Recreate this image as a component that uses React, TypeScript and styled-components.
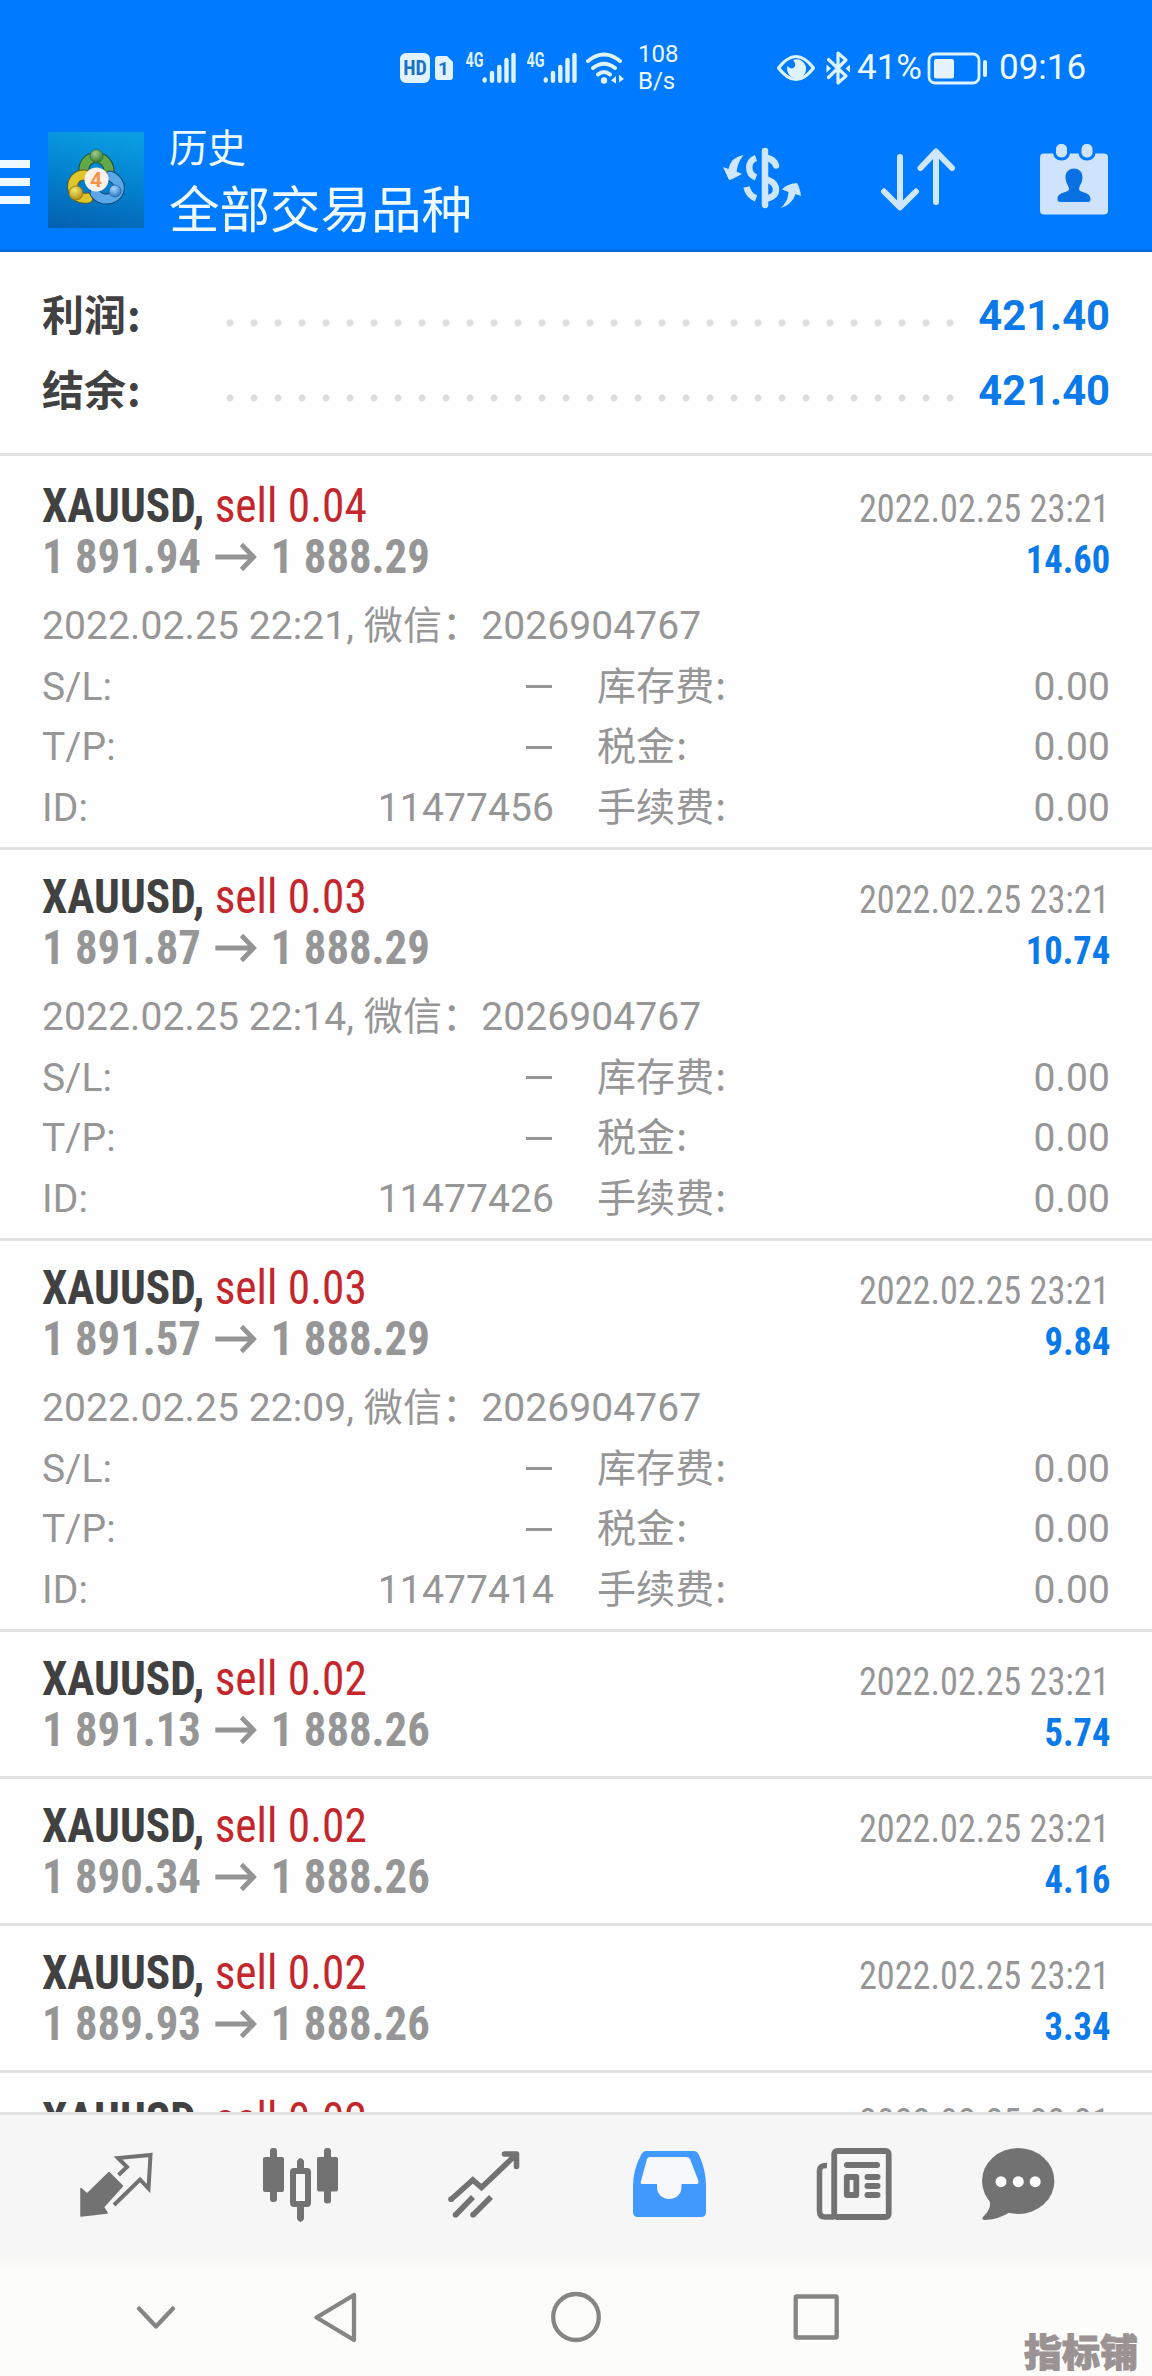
import React from 'react';
import styled, { createGlobalStyle } from 'styled-components';

const GlobalStyle = createGlobalStyle`
  * { box-sizing: border-box; }
  body {
    margin: 0;
    background: #fefefe;
    font-family: Roboto, "Noto Sans CJK SC", sans-serif;
  }
  svg { display: block; flex: none; }
`;

const Screen = styled.div`
  position: relative;
  display: flex;
  flex-direction: column;
  width: 1152px;
  height: 2376px;
  overflow: hidden;
  background: #fefefe;
`;

const Header = styled.header`
  height: 252px;
  background: #007aff;
  border-bottom: 2px solid #0c68cf;
  color: #eefaff;
`;

const StatusBar = styled.div`
  display: flex;
  align-items: center;
  height: 110px;
  padding: 26px 0 0 400px;
`;

const Slot = styled.div<{ $left?: number; $top?: number }>`
  margin-left: ${p => p.$left ?? 0}px;
  margin-top: ${p => p.$top ?? 0}px;
`;

const HdBadge = styled.div`
  width: 30px;
  height: 30px;
  border-radius: 6px;
  background: #e2f3ff;
  color: #1872c8;
  font: 700 20px/31px Roboto, sans-serif;
  font-stretch: 85%;
  text-align: center;
`;

const SpeedText = styled.div`
  width: 40px;
  margin-left: 14px;
  font-size: 24px;
  line-height: 27px;
`;

const StatusText = styled.div<{ $left: number; $width: number }>`
  width: ${p => p.$width}px;
  margin-left: ${p => p.$left}px;
  font-size: 35px;
  line-height: 40px;
  white-space: nowrap;
`;

const AppBar = styled.div`
  display: flex;
  height: 140px;
`;

const Burger = styled.div`
  display: flex;
  flex-direction: column;
  gap: 10px;
  width: 30px;
  margin-top: 50px;
  i { height: 8px; background: #eefaff; }
`;

const Titles = styled.div`
  width: 300px;
  margin: 15px 0 0 25px;
  white-space: nowrap;
`;

const Subtitle = styled.div`
  font-size: 38.5px;
  line-height: 48px;
`;

const Title = styled.div`
  margin-top: 6px;
  font-size: 50.5px;
  line-height: 64px;
`;

const List = styled.main`
  height: 1860px;
  overflow: hidden;
`;

const Summary = styled.section`
  height: 204px;
  margin-bottom: 3px;
  padding: 26px 42px 0;
  border-bottom: 3px solid #e2e2e2;
`;

const SummaryRow = styled.div`
  display: flex;
  align-items: center;
  height: 75px;
  font-size: 41.7px;
  font-weight: 700;
  line-height: 75px;
`;

const SummaryLabel = styled.span`
  width: 176px;
  padding-top: 2px;
  font-size: 42px;
  color: #414141;
`;

const Colon = styled.span`
  margin-left: 1px;
  font-family: "Noto Sans CJK SC", sans-serif;
  line-height: 0;
`;

const Dots = styled.span`
  width: 744px;
  height: 10px;
  margin-top: 14px;
  background: radial-gradient(circle at 12px 5px, #dedede 3px, transparent 4px) 0 0 / 24px 10px repeat-x;
`;

const SummaryValue = styled.span`
  flex: 1;
  text-align: right;
  color: #0a79ea;
`;

const Entry = styled.article<{ $open: boolean }>`
  height: ${p => (p.$open ? 391 : 147)}px;
  padding: 20px 42px 0;
  border-bottom: 3px solid #e2e2e2;
  color: #969696;
`;

const Line = styled.div<{ $height: number }>`
  display: flex;
  align-items: baseline;
  justify-content: space-between;
  height: ${p => p.$height}px;
  line-height: ${p => p.$height}px;
  font-family: "Roboto Condensed", Roboto, sans-serif;
  font-stretch: 75%;
  white-space: nowrap;
`;

const Symbol = styled.span`
  font-size: 48px;
  font-weight: 700;
  color: #414141;
  transform: scaleX(0.944);
  transform-origin: left;
`;

const Side = styled.span`
  font-weight: 400;
  color: #c4262b;
`;

const Prices = styled.span`
  display: flex;
  align-items: center;
  font-size: 48px;
  font-weight: 700;
  transform: scaleX(0.932);
  transform-origin: left;
  svg { margin: 0 15px 0 14px; }
`;

const CloseTime = styled.span`
  font-size: 39px;
  transform: scaleX(0.93);
  transform-origin: right;
`;

const Profit = styled.span`
  font-size: 39px;
  font-weight: 700;
  color: #0a79ea;
  transform: scaleX(0.935);
  transform-origin: right;
`;

const Details = styled.div`
  display: grid;
  grid-template-columns: 512px 1fr;
  column-gap: 43px;
  grid-auto-rows: 60.5px;
  margin-top: 15px;
  font-size: 39px;
  line-height: 60.5px;
  letter-spacing: 0.1px;
`;

const Comment = styled.div`
  grid-column: 1 / -1;
`;

const Field = styled.div`
  display: flex;
  align-items: center;
  justify-content: space-between;
`;

const Dash = styled.i`
  width: 26px;
  height: 3px;
  margin-right: 2px;
  background: #969696;
`;

const TabBar = styled.nav`
  display: flex;
  height: 147px;
  padding: 18px 21px 0 24px;
  border-top: 3px solid #e2e2e2;
  background: #f6f6f6;
  color: #727272;
`;

const Tab = styled.div<{ $active?: boolean }>`
  flex: 1;
  display: flex;
  justify-content: center;
  color: ${p => (p.$active ? '#4199fd' : 'inherit')};
`;

const SystemBar = styled.div`
  display: flex;
  align-items: flex-start;
  height: 117px;
  padding: 30px 0 0 116px;
  background: linear-gradient(#f9f9f8, #fcfcfb 16px);
  color: #858585;
`;

const Watermark = styled.div`
  position: absolute;
  right: 14px;
  bottom: 4px;
  font: 900 38px/44px "Noto Sans CJK SC", sans-serif;
  color: #9b9393;
  -webkit-text-stroke: 1px #9b9393;
`;

const Signal = () => (
  <svg width="50" height="34" viewBox="466 50 50 34" fill="none" stroke="#dff3ff" strokeWidth="4.4" strokeLinecap="round">
    <text x="465.5" y="66" fontSize="20" fontWeight="700" textLength="18" lengthAdjust="spacingAndGlyphs" fill="#dff3ff" stroke="none" fontFamily="Roboto">4G</text>
    <path d="M484.7 78.5v1M492 72v7.7M499.3 66v13.7M506.500 59v20.700M513.500 54v25.700" />
  </svg>
);

const Wifi = () => (
  <svg width="38" height="34" viewBox="586 50 38 34" fill="none" stroke="#dff3ff" strokeWidth="4" strokeLinecap="round">
    <path d="M588 60Q604 47 620 60M593 67Q604 58.500 615 67M598 73.500Q604 68.500 610 73.500" />
    <circle cx="604" cy="79.500" r="3.200" fill="#dff3ff" stroke="none" />
    <path d="M611 79.500l5-4.500v7.500zM624 78l-5-4.500v8z" fill="#dff3ff" stroke="none" />
  </svg>
);

const Eye = () => (
  <svg width="40" height="34" viewBox="776 50 40 34">
    <path d="M778.500 67Q796 44 813.500 67Q796 90 778.500 67Z" fill="none" stroke="#dff3ff" strokeWidth="3.200" strokeLinejoin="round" />
    <path d="M793 59a9.500 9.500 0 1 1-5.500 6q3 4 6.500 1.500q3-3-1-7.500z" fill="#dff3ff" />
  </svg>
);

const Bluetooth = () => (
  <svg width="26" height="36" viewBox="825 49 26 36" fill="none" stroke="#dff3ff" strokeWidth="3.200" strokeLinejoin="round" strokeLinecap="round">
    <path d="M828.500 58.500L846 75L838 82V52L846 59L828.500 76.500" />
    <path d="M826.500 63.500l4.500 4l-4.500 4zM850 63.500l-4.500 4l4.500 4z" fill="#dff3ff" stroke="none" />
  </svg>
);

const Battery = () => (
  <svg width="61" height="34" viewBox="927 50 61 34">
    <rect x="929" y="53" width="50" height="29" rx="6" fill="none" stroke="#dff3ff" strokeWidth="2.800" />
    <rect x="934" y="58" width="20" height="19.500" rx="2" fill="#e6f3ff" />
    <rect x="983" y="59" width="4" height="17" rx="2" fill="#dff3ff" />
  </svg>
);

const AppLogo = () => (
  <svg width="96" height="96" viewBox="0 0 96 96">
    <defs>
      <linearGradient id="sky" x1="0.6" y1="0" x2="0.4" y2="1">
        <stop offset="0" stopColor="#0a9de2" />
        <stop offset="0.5" stopColor="#0382cf" />
        <stop offset="1" stopColor="#0464b4" />
      </linearGradient>
      <radialGradient id="green" cx="0.4" cy="0.3" r="0.8"><stop offset="0" stopColor="#9fce8c" /><stop offset="1" stopColor="#226f22" /></radialGradient>
      <radialGradient id="gold" cx="0.4" cy="0.3" r="0.8"><stop offset="0" stopColor="#f5e66c" /><stop offset="1" stopColor="#a78408" /></radialGradient>
      <radialGradient id="blue" cx="0.4" cy="0.3" r="0.8"><stop offset="0" stopColor="#a8dcff" /><stop offset="1" stopColor="#1c68bd" /></radialGradient>
    </defs>
    <rect width="96" height="96" fill="url(#sky)" />
    <g fill="none" strokeLinecap="round">
      <path d="M36 40C34 20 64 20 61 44" stroke="#194e37" strokeWidth="11" />
      <path d="M36 40C34 20 64 20 61 44" stroke="#62a846" strokeWidth="9" />
      <path d="M37 43C20 42 20 69 40 66" stroke="#5c5a20" strokeWidth="11" />
      <path d="M37 43C20 42 20 69 40 66" stroke="#dfc62c" strokeWidth="9" />
      <path d="M47 61C54 72 74 67 71 53Q68 46 62 44" stroke="#134779" strokeWidth="11" />
      <path d="M47 61C54 72 74 67 71 53Q68 46 62 44" stroke="#5ba8e8" strokeWidth="9" />
    </g>
    <circle cx="48.500" cy="24" r="6.500" fill="url(#green)" stroke="#2b6a3a" strokeWidth="0.800" />
    <circle cx="28" cy="61" r="7" fill="url(#gold)" stroke="#8d7410" strokeWidth="0.800" />
    <circle cx="67" cy="59" r="6" fill="url(#blue)" stroke="#1f62a8" strokeWidth="0.800" />
    <circle cx="48.500" cy="47.500" r="12" fill="#fbf1ea" />
    <text x="48" y="55" textAnchor="middle" fontSize="21" fontWeight="700" fill="#f39449" fontFamily="Roboto">4</text>
  </svg>
);

const DollarCycle = () => (
  <svg width="80" height="66" viewBox="722 145 80 66" fill="none" stroke="#cfe6ff" strokeWidth="6.500">
    <path d="M765 151V205" strokeLinecap="round" />
    <path d="M756 158C747 161 747 174 756 177.500M746.500 187Q748.500 195.500 756 198.500" />
    <path d="M767 158Q774 159.500 776 165.500" strokeLinecap="round" />
    <path d="M767 179.500Q776 182.500 776 190Q776 196.500 767 198.500" />
    <path d="M743.500 155Q731 157 728.500 169L723 167L729 180Q731 180 742 174L736.500 171.500Q738 162 743.500 155ZM780.500 208Q788 202 788.500 192L782 189.500Q786 184 797 183Q800 188 801 196L795.500 194Q792 205 780.500 208Z" fill="#cfe6ff" stroke="none" />
  </svg>
);

const SortArrows = () => (
  <svg width="76" height="66" viewBox="880 146 76 66" fill="none" stroke="#cfe6ff" strokeWidth="6" strokeLinecap="round" strokeLinejoin="round">
    <path d="M900 157V207M884 191.500L900 207.500L916 191.500M936 202V152M920.500 168L936 151.500L952 168" />
  </svg>
);

const CalendarPerson = () => (
  <svg width="68" height="74" viewBox="1040 142 68 74" fill="#cfe4fc">
    <rect x="1040" y="153.500" width="68" height="61" rx="4" />
    <g stroke="#007aff" strokeWidth="6" paintOrder="stroke">
      <rect x="1056" y="144" width="11" height="13.500" rx="5" />
      <rect x="1081.500" y="144" width="11" height="13.500" rx="5" />
    </g>
    <path d="M1065.500 177C1065.500 165.500 1082.500 165.500 1082.500 177C1082.500 183 1079.500 185 1079 189C1079 193 1090.500 191.500 1090.500 199Q1090.500 202 1088 202H1060Q1057.500 202 1057.500 199C1057.500 191.500 1069 193 1069 189C1068.500 185 1065.500 183 1065.500 177Z" fill="#0a71e2" />
  </svg>
);

const PriceArrow = () => (
  <svg width="46" height="30" viewBox="0 0 46 30" fill="none" stroke="#949494" strokeWidth="5">
    <path d="M1 15H42M29 2.500L42 15L29 27.500" />
  </svg>
);

const QuotesIcon = () => (
  <svg width="120" height="100" viewBox="56 2133 120 100">
    <path d="M81 2188.500L87 2194L109 2172.500L122.500 2186L103.500 2207L107 2213L81 2216Z" fill="currentColor" stroke="currentColor" strokeWidth="1.500" strokeLinejoin="round" />
    <path d="M118.500 2175L127 2167L118 2158L150.500 2155L148.500 2188.500L140 2179.500L114 2205" fill="none" stroke="currentColor" strokeWidth="4" />
  </svg>
);

const ChartIcon = () => (
  <svg width="120" height="100" viewBox="240 2133 120 100" fill="currentColor">
    <rect x="262" y="2157" width="21" height="35" rx="2" />
    <rect x="269" y="2148" width="7" height="54" rx="3" />
    <rect x="316" y="2157" width="21" height="34.500" rx="2" />
    <rect x="323" y="2148" width="7" height="55.500" rx="3" />
    <rect x="292" y="2171" width="15" height="33" rx="1" fill="none" stroke="currentColor" strokeWidth="6" />
    <path d="M296 2170v-9q3.500-6 7 0v9zM296 2205v14q3.500 6 7 0v-14z" />
  </svg>
);

const TradeIcon = () => (
  <svg width="120" height="100" viewBox="425 2133 120 100" fill="none" stroke="currentColor" strokeWidth="5.600">
    <path d="M451 2199.500L472.800 2180L481.500 2187.500L515 2155.500" />
    <path d="M504.500 2154H516.500V2166.500" strokeLinecap="round" strokeLinejoin="round" />
    <path d="M455.500 2215L473 2197M473 2215L491 2197" />
    <g fill="currentColor" stroke="none">
      <circle cx="451" cy="2199.300" r="2.800" />
      <circle cx="455.500" cy="2214.800" r="2.800" />
      <circle cx="473" cy="2214.800" r="2.800" />
    </g>
  </svg>
);

const HistoryIcon = () => (
  <svg width="120" height="100" viewBox="609 2133 120 100">
    <path d="M645 2151H693Q696 2151 698 2155Q705 2170 705 2186V2212Q705 2217 700 2217H637Q632 2217 632 2212V2186Q632 2170 640 2155Q642 2151 645 2151Z" fill="currentColor" />
    <path d="M649 2157H685Q688 2157 689 2159L697.500 2181Q698 2184 696 2184H680.500V2187C680.500 2203 656 2203 656 2187V2184H641Q639 2184 640 2181L646 2159Q647 2157 649 2157Z" fill="#f6f8fc" />
  </svg>
);

const NewsIcon = () => (
  <svg width="120" height="100" viewBox="794 2133 120 100" fill="currentColor">
    <rect x="834.200" y="2151" width="54.500" height="66" rx="3" fill="none" stroke="currentColor" strokeWidth="5.800" />
    <path d="M827 2165.500Q819.500 2165 819.500 2171V2211Q819.500 2217 825 2217H834" fill="none" stroke="currentColor" strokeWidth="5.500" />
    <rect x="844" y="2162" width="36" height="6" rx="3" />
    <rect x="846.800" y="2177" width="9.500" height="18" fill="none" stroke="currentColor" strokeWidth="5.800" strokeLinejoin="round" />
    <rect x="864.500" y="2174" width="16" height="6" rx="3" />
    <rect x="864.500" y="2183" width="16" height="6" rx="3" />
    <rect x="864.500" y="2192" width="16" height="6" rx="3" />
  </svg>
);

const ChatIcon = () => (
  <svg width="120" height="100" viewBox="979 2133 120 100" fill="currentColor">
    <ellipse cx="1018.200" cy="2181" rx="36.200" ry="33" />
    <path d="M988 2198Q994 2206 983 2217Q981 2220 985 2220Q1000 2219 1010 2212Z" />
    <g fill="#fff">
      <circle cx="1001" cy="2181.700" r="5.500" />
      <circle cx="1018.300" cy="2181.700" r="5.500" />
      <circle cx="1035.200" cy="2181.700" r="5.500" />
    </g>
  </svg>
);

const SystemIcon = ({ children }: { children: React.ReactNode }) => (
  <svg width="80" height="60" viewBox="0 0 80 60" fill="none" stroke="currentColor" strokeWidth="4.300" strokeLinecap="round" strokeLinejoin="round">
    {children}
  </svg>
);

type Deal = {
  volume: string;
  open: string;
  close: string;
  profit: string;
  opened?: string;
  id?: string;
};

const deals: Deal[] = [
  { volume: '0.04', open: '1 891.94', close: '1 888.29', profit: '14.60', opened: '2022.02.25 22:21', id: '11477456' },
  { volume: '0.03', open: '1 891.87', close: '1 888.29', profit: '10.74', opened: '2022.02.25 22:14', id: '11477426' },
  { volume: '0.03', open: '1 891.57', close: '1 888.29', profit: '9.84', opened: '2022.02.25 22:09', id: '11477414' },
  { volume: '0.02', open: '1 891.13', close: '1 888.26', profit: '5.74' },
  { volume: '0.02', open: '1 890.34', close: '1 888.26', profit: '4.16' },
  { volume: '0.02', open: '1 889.93', close: '1 888.26', profit: '3.34' },
  { volume: '0.02', open: '', close: '', profit: '' },
];

const DealEntry = ({ deal }: { deal: Deal }) => (
  <Entry $open={!!deal.id}>
    <Line $height={53}>
      <Symbol>XAUUSD, <Side>sell {deal.volume}</Side></Symbol>
      <CloseTime>2022.02.25 23:21</CloseTime>
    </Line>
    {deal.open && (
      <Line $height={49}>
        <Prices>{deal.open}<PriceArrow />{deal.close}</Prices>
        <Profit>{deal.profit}</Profit>
      </Line>
    )}
    {deal.id && (
      <Details>
        <Comment>{deal.opened}, 微信：2026904767</Comment>
        <Field>S/L:<Dash /></Field>
        <Field><span>库存费<Colon>:</Colon></span><span>0.00</span></Field>
        <Field>T/P:<Dash /></Field>
        <Field><span>税金<Colon>:</Colon></span><span>0.00</span></Field>
        <Field><span>ID:</span><span>{deal.id}</span></Field>
        <Field><span>手续费<Colon>:</Colon></span><span>0.00</span></Field>
      </Details>
    )}
  </Entry>
);

export default function App() {
  return (
    <Screen>
      <GlobalStyle />
      <Header>
        <StatusBar>
          <HdBadge>HD</HdBadge>
          <Slot $left={5}>
            <svg width="18" height="24" viewBox="0 0 18 24">
              <path d="M3 0h9l6 6v15q0 3-3 3H3q-3 0-3-3V3q0-3 3-3z" fill="#e2f3ff" />
              <text x="8.500" y="19" textAnchor="middle" fontSize="19" fontWeight="700" fill="#1872c8" fontFamily="Roboto">1</text>
            </svg>
          </Slot>
          <Slot $left={13}><Signal /></Slot>
          <Slot $left={11}><Signal /></Slot>
          <Slot $left={9}><Wifi /></Slot>
          <SpeedText>108<br />B/s</SpeedText>
          <Slot $left={98}><Eye /></Slot>
          <Slot $left={9}><Bluetooth /></Slot>
          <StatusText $left={6} $width={66}>41%</StatusText>
          <Slot $left={4}><Battery /></Slot>
          <StatusText $left={11} $width={90}>09:16</StatusText>
        </StatusBar>
        <AppBar>
          <Burger><i /><i /><i /></Burger>
          <Slot $left={18} $top={22}><AppLogo /></Slot>
          <Titles>
            <Subtitle>历史</Subtitle>
            <Title>全部交易品种</Title>
          </Titles>
          <Slot $left={253} $top={35}><DollarCycle /></Slot>
          <Slot $left={78} $top={36}><SortArrows /></Slot>
          <Slot $left={84} $top={32}><CalendarPerson /></Slot>
        </AppBar>
      </Header>

      <List>
        <Summary>
          <SummaryRow>
            <SummaryLabel>利润<Colon>:</Colon></SummaryLabel><Dots /><SummaryValue>421.40</SummaryValue>
          </SummaryRow>
          <SummaryRow>
            <SummaryLabel>结余<Colon>:</Colon></SummaryLabel><Dots /><SummaryValue>421.40</SummaryValue>
          </SummaryRow>
        </Summary>
        {deals.map((deal, i) => <DealEntry key={i} deal={deal} />)}
      </List>

      <TabBar>
        <Tab><QuotesIcon /></Tab>
        <Tab><ChartIcon /></Tab>
        <Tab><TradeIcon /></Tab>
        <Tab $active><HistoryIcon /></Tab>
        <Tab><NewsIcon /></Tab>
        <Tab><ChatIcon /></Tab>
      </TabBar>

      <SystemBar>
        <SystemIcon><path d="M23 19.500L40 37.500L57 19.500" /></SystemIcon>
        <Slot $left={100}><SystemIcon><path d="M20.500 28.500L58 6V51Z" /></SystemIcon></Slot>
        <Slot $left={160}><SystemIcon><ellipse cx="40" cy="28" rx="22.800" ry="23" /></SystemIcon></Slot>
        <Slot $left={160}><SystemIcon><rect x="19.700" y="7.500" width="41" height="41" rx="1" /></SystemIcon></Slot>
      </SystemBar>
      <Watermark>指标铺</Watermark>
    </Screen>
  );
}
